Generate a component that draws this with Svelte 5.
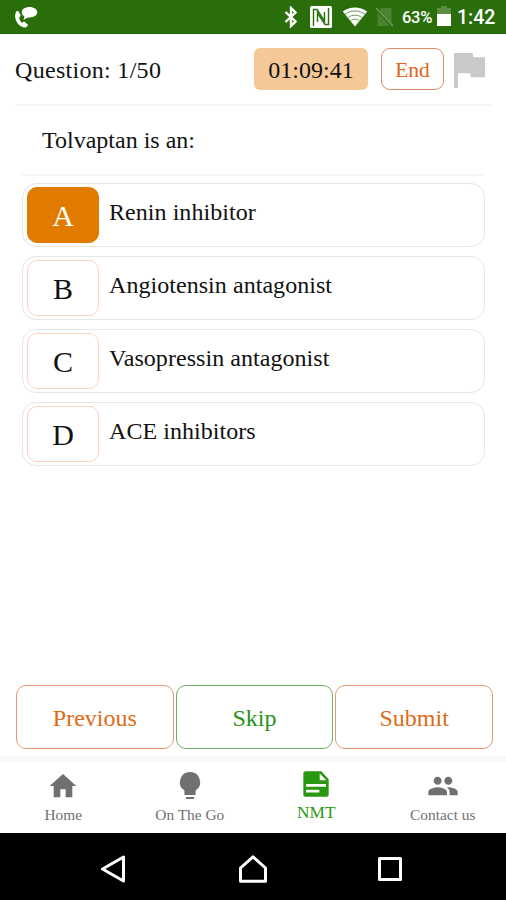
<script>
  let selected = $state("A");
  let tab = $state("NMT");

  const options = [
    { key: "A", text: "Renin inhibitor" },
    { key: "B", text: "Angiotensin antagonist" },
    { key: "C", text: "Vasopressin antagonist" },
    { key: "D", text: "ACE inhibitors" },
  ];

  // material icon paths, 24x24
  const tabs = [
    { name: "Home", icon: "M10 20.500v-6h4v6h5v-8.500h3L12 3 2 12h3v8.500z" },
    {
      name: "On The Go",
      icon: "M9 21.800h6v-1.500H9zM12 1.500a7.600 7.600 0 0 0-4.200 13.900V18.800h8.400V15.400A7.600 7.600 0 0 0 12 1.500z",
    },
    {
      name: "NMT",
      icon: "M16 2.500H4.200C3.200 2.500 2.500 3.200 2.500 4.200v15.600c0 1 .7 1.700 1.700 1.700h15.600c1 0 1.700-.7 1.700-1.700V8.500zM4.500 18.400v-2h10v2zm0-4.400v-2h15v2zM14.800 9.200V4.200L19.800 9.200z",
    },
    {
      name: "Contact us",
      icon: "M16 11c1.66 0 2.99-1.34 2.99-3S17.66 5 16 5s-3 1.34-3 3 1.34 3 3 3zm-8 0c1.66 0 2.99-1.34 2.99-3S9.66 5 8 5 5 6.34 5 8s1.34 3 3 3zm0 2c-2.33 0-7 1.17-7 3.5V19h14v-2.5C15 14.17 10.33 13 8 13zm8 0c-.29 0-.62.02-.97.05 1.16.84 1.97 1.97 1.97 3.45V19h6v-2.5c0-2.33-4.67-3.5-7-3.5z",
    },
  ];
</script>

<div class="screen">
  <div class="status">
    <svg class="call" width="24" height="22" viewBox="0 0 24 22" fill="#fff">
      <path d="M2 6c-3 6 2 15 9 15.500 1.500.1 2.700-1.300 3-2.700l-3.800-3.300-2.500 1.300C6.500 15.500 5.500 13.500 5.200 11.500l1.600-2L4.200 5C3.400 4.800 2.500 5 2 6z" />
      <path d="M15.500 1C11 1 7.700 3.300 7.700 6.300c0 1.800 1 3.200 2.700 4.100L9.500 13.700l4.500-2.300c5.500.4 9.300-1.900 9.300-5.100C23.300 3.300 20 1 15.500 1z" />
    </svg>
    <svg width="14" height="22" viewBox="0 0 14 22" fill="none" stroke="#fff" stroke-width="2.400">
      <path d="M1.500 6l10 9.500L7 20V2l4.500 4.500L1.500 16" />
    </svg>
    <svg class="nfc" width="22" height="22" viewBox="0 0 22 22">
      <rect width="22" height="22" rx="1.500" fill="#fff" />
      <path d="M3.500 20V3.500h3.500L14.500 15V6M18.500 2v16.500H15L7.500 7v9" fill="none" stroke="#2a6e0b" stroke-width="1.400" />
    </svg>
    <svg class="wifi" width="26" height="21" viewBox="0 0 26 21">
      <path d="M13 20.500L.8 5.500C8 .2 18 .2 25.200 5.500z" fill="#fff" />
      <path d="M3 8.300c6-4.500 14-4.500 20 0M5.800 11.600c4.500-3.200 9.900-3.200 14.400 0M8.500 14.700c3-2 6-2 9 0" fill="none" stroke="#6d9a57" stroke-width="1" />
    </svg>
    <svg class="sim" width="20" height="21" viewBox="0 0 20 21">
      <path d="M6 2h10.500v15.500L4.500 4zM2.500 6.500L15 20H2.500z" fill="#4c8231" />
      <path d="M1 2l17 18" stroke="#6d9a57" stroke-width="1.500" />
    </svg>
    <span class="percent">63%</span>
    <svg class="battery" width="14" height="21" viewBox="0 0 14 21">
      <path d="M4 0h6v2h4v6H0V2h4z" fill="#5a8c41" />
      <path d="M0 8h14v12H0z" fill="#fff" />
    </svg>
    <span class="clock">1:42</span>
  </div>

  <header>
    <span class="count">Question: 1/50</span>
    <span class="timer">01:09:41</span>
    <button class="end">End</button>
    <svg class="flag" width="31" height="35" viewBox="0 0 31 35">
      <path d="M0 0h18.500l1 4.300H31v20H17l-1-4H4V35H0z" fill="#c9c9c9" />
    </svg>
  </header>

  <main>
    <p class="question">Tolvaptan is an:</p>
    <div class="options">
      {#each options as o}
        <button class="option" onclick={() => (selected = o.key)}>
          <span class="letter" class:selected={selected === o.key}>{o.key}</span>
          <span class="answer">{o.text}</span>
        </button>
      {/each}
    </div>
  </main>

  <div class="actions">
    <button>Previous</button>
    <button class="skip">Skip</button>
    <button>Submit</button>
  </div>

  <nav>
    {#each tabs as t}
      <button class="tab" class:active={tab === t.name} onclick={() => (tab = t.name)}>
        <svg viewBox="0 0 24 24" fill="currentColor" fill-rule="evenodd"><path d={t.icon} /></svg>
        <span>{t.name}</span>
      </button>
    {/each}
  </nav>

  <div class="system">
    <svg width="26" height="28" viewBox="0 0 26 28"><path d="M23.500 2v24L2.500 14z" /></svg>
    <svg width="30" height="28" viewBox="0 0 30 28"><path d="M2.500 26.200V13L15 1.800 27.500 13v13.200z" /></svg>
    <svg width="26" height="28" viewBox="0 0 26 28"><path d="M2.500 3.500h21v21h-21z" /></svg>
  </div>
</div>

<style>
  :global(body) { margin: 0; background: #fff; }
  .screen {
    width: 506px; height: 900px; overflow: hidden;
    display: flex; flex-direction: column; background: #fff; color: #111;
    font-family: "Liberation Serif", serif; font-size: 24px;
  }
  button {
    font: inherit; color: inherit; background: #fff; margin: 0; padding: 0;
    box-sizing: border-box; cursor: pointer;
  }
  svg { display: block; flex: none; }

  .status {
    height: 34px; flex: none; box-sizing: border-box; padding: 0 10px 0 14px;
    display: flex; align-items: center; background: #2a6e0b; color: #fff;
    font-family: Roboto, sans-serif; border-bottom: 1px solid #1f5d05;
  }
  .call { margin-right: auto; }
  .nfc { margin-left: 12px; }
  .wifi { margin-left: 10px; }
  .sim { margin-left: 7px; }
  .percent {
    width: 32px; margin: 2px 0 0 7px; font-size: 16.5px; font-weight: 500;
    letter-spacing: -0.3px;
  }
  .battery { margin-left: 3px; }
  .clock { width: 39px; margin: 2px 0 0 6px; font-size: 19.5px; font-weight: 500; }

  header {
    height: 70px; flex: none; margin: 0 14px 0 15px; padding-right: 7px;
    display: flex; align-items: center; border-bottom: 2px solid #f5f5f5;
  }
  .count { margin: 3px auto 0 0; letter-spacing: 0.3px; }
  .timer {
    width: 114px; height: 42px; line-height: 45px; border-radius: 6px;
    background: #f5c897; text-align: center;
  }
  .end {
    width: 63px; height: 42px; margin: 0 10px 0 13px; padding-top: 3px;
    border: 1.5px solid #e28a63; border-radius: 9px; color: #e0651a; font-size: 21.5px;
  }
  .flag { margin-top: 2px; }

  main { flex: 1; margin: 0 21px 0 22px; }
  .question {
    height: 70px; box-sizing: border-box; margin: 0; padding: 19px 20px 0;
    line-height: 30px; border-bottom: 2px solid #f5f5f5;
  }
  .options { display: flex; flex-direction: column; gap: 9px; margin-top: 7px; }
  .option {
    height: 64px; padding: 3px 4px; display: flex; text-align: left;
    border: 1.5px solid #e6e6e6; border-radius: 14px;
  }
  .letter {
    width: 72px; height: 56px; box-sizing: border-box; border: 1px solid #fad3bf;
    border-radius: 10px; font-size: 30px; line-height: 56px; text-align: center;
  }
  .letter.selected { background: #e07b00; border-color: #e07b00; color: #fff; }
  .answer { margin-left: 10px; line-height: 51px; letter-spacing: 0.05px; }

  .actions { display: flex; gap: 2px; margin: 0 13px 7px 16px; }
  .actions button {
    flex: 1; height: 64px; padding-top: 2px; border: 1.5px solid #e8996f;
    border-radius: 10px; color: #de6b16;
  }
  .actions .skip { border-color: #6bb062; color: #27931a; }

  nav {
    height: 77px; flex: none; box-sizing: border-box;
    display: grid; grid-template-columns: repeat(4, 1fr);
    border-top: 6px solid #f8f8f8;
  }
  .tab {
    display: flex; flex-direction: column; align-items: center;
    border: 0; padding-top: 8px; color: #707070; font-size: 15.4px;
  }
  .tab svg { width: 32px; height: 32px; }
  .tab span { margin-top: 4px; line-height: 18px; }
  .tab.active { padding-top: 6px; color: #2a9710; font-size: 17.3px; }

  .system {
    height: 67px; flex: none; box-sizing: border-box; padding-left: 100px;
    background: #000; display: flex; align-items: center; gap: 109px;
  }
  .system svg { fill: none; stroke: #fff; stroke-width: 3; stroke-linejoin: round; margin-top: 5px; }
  .system svg:first-child { margin-right: 3px; }
</style>
